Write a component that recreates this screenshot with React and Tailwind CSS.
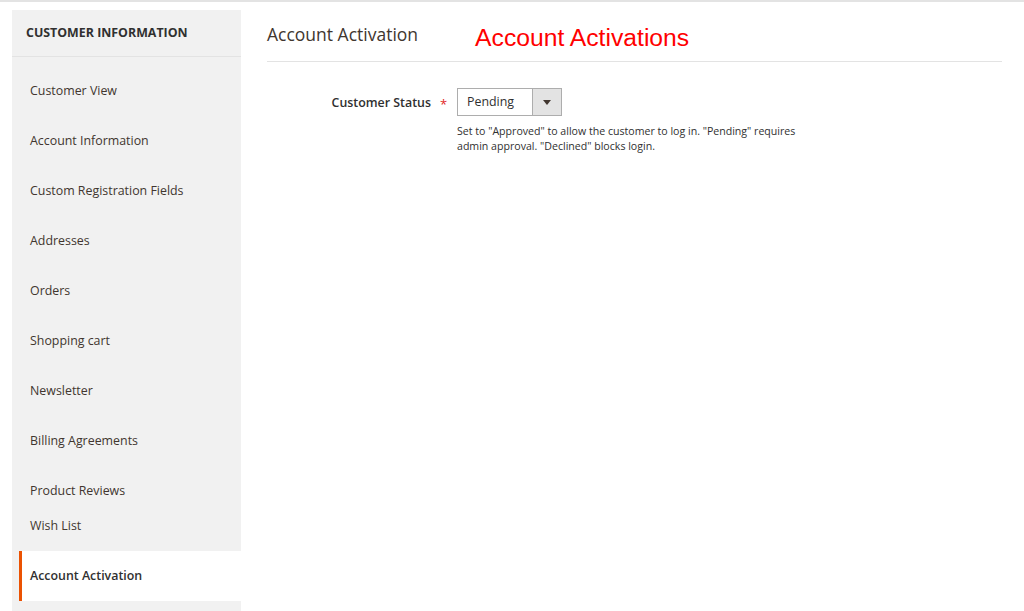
import React from "react";

const items = [
  "Customer View",
  "Account Information",
  "Custom Registration Fields",
  "Addresses",
  "Orders",
  "Shopping cart",
  "Newsletter",
  "Billing Agreements",
  "Product Reviews",
];

export default function App() {
  return (
    <div className="w-[1024px] h-[611px] overflow-hidden bg-white border-t-2 border-[#e3e3e3] text-[#303030]" style={{ fontFamily: "'Open Sans', sans-serif" }}>
      <div className="flex pt-[8px] pl-[12px]">
        {/* Sidebar */}
        <div className="w-[229px] h-[620px] bg-[#f1f1f1] shrink-0">
          <div className="h-[47px] flex items-center px-[14px] border-b border-[#e3e3e3] text-[12.4px] font-bold text-[#303030]">
            CUSTOMER INFORMATION
          </div>
          <div className="pt-[9px]">
            {items.map((t) => (
              <div key={t} className="h-[50px] flex items-center pl-[18px] text-[12.4px] text-[#41362f]">
                {t}
              </div>
            ))}
            <div className="h-[35px] flex items-start pl-[18px] pt-[1px] text-[12.4px] text-[#41362f]">Wish List</div>
            <div className="h-[50px] ml-[7px] bg-white border-l-[3px] border-[#eb5202] flex items-center pl-[8px] text-[12.4px] font-semibold text-[#303030]">
              Account Activation
            </div>
          </div>
        </div>
        {/* Main */}
        <div className="ml-[26px] w-[735px]">
          <div className="flex items-center h-[52px] border-b border-[#e3e3e3]">
            <div className="text-[17.5px] text-[#41362f] -mt-[2px]">Account Activation</div>
            <div className="ml-[57px] mt-[4px] text-[24.7px] text-[#ff0000]" style={{ fontFamily: "'Liberation Sans', Arial, sans-serif" }}>
              Account Activations
            </div>
          </div>
          <div className="flex mt-[26px]">
            <div className="w-[164px] flex justify-end items-start pt-[6px] text-[12.4px] font-semibold text-[#303030]">Customer Status</div>
            <div className="w-[26px] pl-[9px] pt-[7px] text-[#e22626] text-[13px]">*</div>
            <div>
              <div className="flex w-[105px] h-[28px] border border-[#adadad] text-[12.4px]">
                <div className="flex-1 flex items-center pl-[9px] bg-white">Pending</div>
                <div className="w-[29px] bg-[#e3e3e3] border-l border-[#adadad] flex items-center justify-center">
                  <svg width="8" height="5" viewBox="0 0 8 5"><path d="M0 0h8L4 5z" fill="#41362f" /></svg>
                </div>
              </div>
              <div className="mt-[8px] w-[345px] text-[10.6px] leading-[15px] text-[#303030]">
                Set to "Approved" to allow the customer to log in. "Pending" requires admin approval. "Declined" blocks login.
              </div>
            </div>
          </div>
        </div>
      </div>
    </div>
  );
}
